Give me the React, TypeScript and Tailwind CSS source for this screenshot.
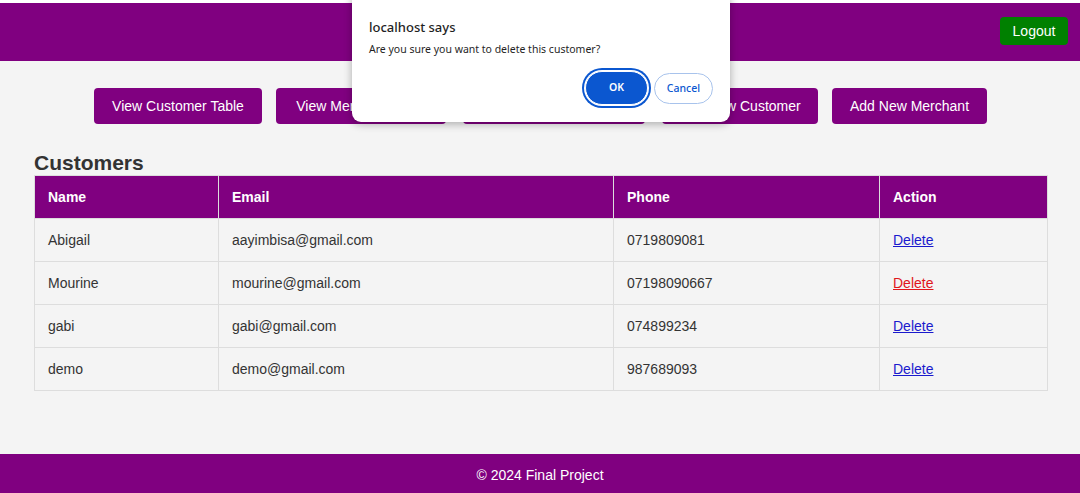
import React from "react";

const customers = [
  { name: "Abigail", email: "aayimbisa@gmail.com", phone: "0719809081", hover: false },
  { name: "Mourine", email: "mourine@gmail.com", phone: "07198090667", hover: true },
  { name: "gabi", email: "gabi@gmail.com", phone: "074899234", hover: false },
  { name: "demo", email: "demo@gmail.com", phone: "987689093", hover: false },
];

const navButtons = [
  { label: "View Customer Table", cls: "w-[168px]" },
  { label: "View Merchant Table", cls: "w-[170px]" },
  { label: "View Transaction Table", cls: "w-[182px] mx-[3px]" },
  { label: "Add New Customer", cls: "w-[156px]" },
  { label: "Add New Merchant", cls: "w-[155px]" },
];

export default function App() {
  return (
    <div
      className="relative flex min-h-[493px] w-[1080px] flex-col overflow-hidden bg-[#f4f4f4] text-[#333]"
      style={{ fontFamily: '"Liberation Sans", Arial, sans-serif' }}
    >
      <div className="h-[3px] bg-white" />
      <header className="flex h-[58px] items-center justify-end bg-[#800080] pb-[2px] pr-[12px]">
        <button className="h-[28px] w-[68px] rounded-[4px] bg-[#008000] text-[14px] text-white">
          Logout
        </button>
      </header>

      <main className="flex-1 px-[34px]">
        <div className="mt-[27px] flex justify-center gap-[14px] pl-[1px]">
          {navButtons.map((b) => (
            <button
              key={b.label}
              className={`h-[36px] whitespace-nowrap rounded-[4px] bg-[#800080] text-[14px] text-white ${b.cls}`}
            >
              {b.label}
            </button>
          ))}
        </div>

        <h2 className="mt-[26px] h-[25px] text-[21px] font-bold leading-[25px] text-[#333]">
          Customers
        </h2>

        <table className="w-[1013px] table-fixed border-collapse text-[14px]">
          <colgroup>
            <col className="w-[184px]" />
            <col className="w-[395px]" />
            <col className="w-[266px]" />
            <col className="w-[168px]" />
          </colgroup>
          <thead>
            <tr className="h-[43px] bg-[#800080] text-left text-white">
              {["Name", "Email", "Phone", "Action"].map((h) => (
                <th key={h} className="border border-[#ddd] px-[13px] font-bold">
                  {h}
                </th>
              ))}
            </tr>
          </thead>
          <tbody>
            {customers.map((c) => (
              <tr key={c.name} className="h-[43px] bg-[#f4f4f4]">
                <td className="border border-[#ddd] px-[13px]">{c.name}</td>
                <td className="border border-[#ddd] px-[13px]">{c.email}</td>
                <td className="border border-[#ddd] px-[13px]">{c.phone}</td>
                <td className="border border-[#ddd] px-[13px]">
                  <a
                    href="#"
                    className={`underline ${c.hover ? "text-[#e0161b]" : "text-[#1a1acd]"}`}
                  >
                    Delete
                  </a>
                </td>
              </tr>
            ))}
          </tbody>
        </table>
      </main>

      <footer className="mt-[63px] flex h-[39px] items-center justify-center bg-[#800080] pt-[4px] text-[14px] text-white">
        © 2024 Final Project
      </footer>

      {/* Browser confirm dialog */}
      <div
        className="absolute left-[352px] top-[-10px] h-[132px] w-[378px] rounded-[9px] bg-white shadow-[0_2px_8px_rgba(0,0,0,0.3)]"
        style={{ fontFamily: '"Noto Sans", "Open Sans", sans-serif' }}
      >
        <div className="pl-[17px] pt-[27px] text-[13px] font-medium leading-[20px] text-[#1f1f1f]">
          localhost says
        </div>
        <div className="pl-[17px] pt-[4px] text-[10.5px] leading-[16px] text-[#1f1f1f]">
          Are you sure you want to delete this customer?
        </div>
        <div className="mr-[17px] mt-[14px] flex justify-end gap-[6px]">
          <button className="flex h-[34px] w-[63px] items-center justify-center rounded-full border border-white bg-[#0b57d0] text-[10.5px] font-semibold text-white ring-2 ring-[#0b57d0] ring-offset-[1px] ring-offset-white">
            OK
          </button>
          <button className="mt-[2px] flex h-[31px] w-[59px] items-center justify-center rounded-full border border-[#a8c3ec] bg-white text-[10.5px] font-medium text-[#0b57d0]">
            Cancel
          </button>
        </div>
      </div>
    </div>
  );
}
